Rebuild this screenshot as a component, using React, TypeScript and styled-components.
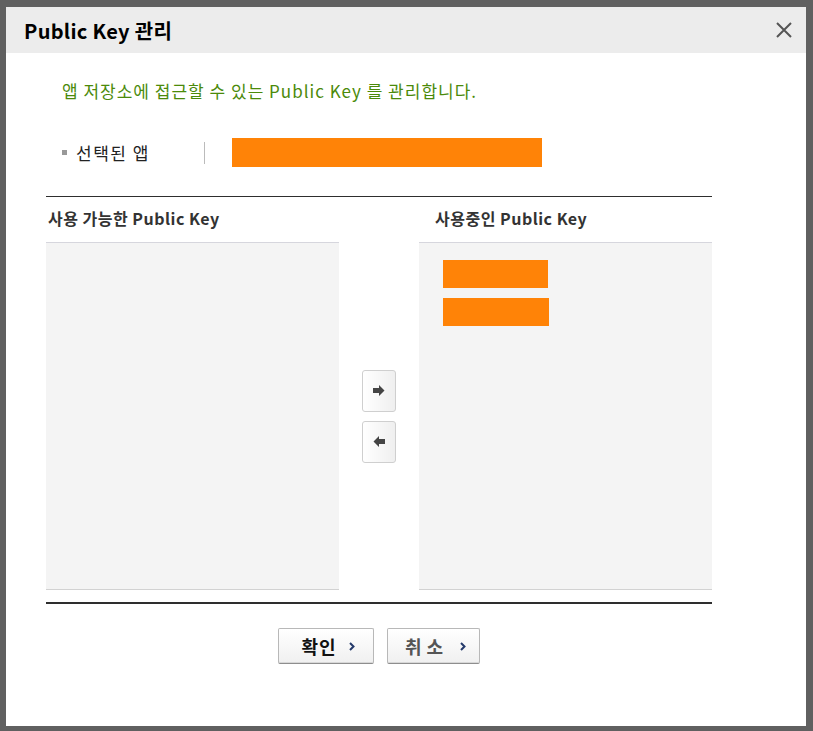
import React from "react";
import styled, { createGlobalStyle } from "styled-components";

const Global = createGlobalStyle`
  html, body { margin: 0; padding: 0; background: #606060; }
  body { font-family: "Noto Sans CJK KR", "Noto Sans", sans-serif; }
`;

const Frame = styled.div`
  padding: 7px 7px 5px 6px;
`;

const Dialog = styled.div`
  width: 800px;
  height: 719px;
  background: #fff;
  display: flex;
  flex-direction: column;
`;

const Header = styled.div`
  height: 46px;
  background: #ececec;
  display: flex;
  align-items: center;
  justify-content: space-between;
  padding: 0 13px 0 18px;
  box-sizing: border-box;
`;

const Title = styled.h1`
  margin: 0;
  font-size: 20px;
  font-weight: 700;
  color: #000;
  letter-spacing: 0.3px;
`;

const Close = styled.button`
  border: none;
  background: none;
  padding: 0;
  width: 18px;
  height: 18px;
  display: flex;
  cursor: pointer;
`;

const Body = styled.div`
  padding: 0 94px 0 40px;
  display: flex;
  flex-direction: column;
`;

const Desc = styled.p`
  margin: 27px 0 0 16px;
  font-size: 17px;
  line-height: 22px;
  color: #4b8a0a;
  letter-spacing: 1px;
`;

const AppRow = styled.div`
  display: flex;
  align-items: center;
  margin: 36px 0 0 16px;
  height: 29px;
`;

const Label = styled.span`
  width: 142px;
  font-size: 17px;
  color: #222;
  display: flex;
  align-items: center;
  gap: 9px;
  letter-spacing: 1.5px;
  &::before {
    content: "";
    width: 5px;
    height: 5px;
    background: #999;
  }
`;

const Divider = styled.span`
  width: 1px;
  height: 22px;
  background: #bbb;
  margin-right: 27px;
`;

const Redact = styled.div<{ $w: number; $h: number }>`
  width: ${(p) => p.$w}px;
  height: ${(p) => p.$h}px;
  background: #ff8307;
`;

const Section = styled.div`
  margin-top: 29px;
  border-top: 1px solid #2e2e2e;
  border-bottom: 2px solid #2e2e2e;
  display: grid;
  grid-template-columns: 293px 1fr 293px;
  padding-bottom: 12px;
`;

const Column = styled.div`
  display: flex;
  flex-direction: column;
`;

const ColTitle = styled.div`
  height: 45px;
  box-sizing: border-box;
  padding: 0 0 4px 2px;
  display: flex;
  align-items: center;
  font-size: 16px;
  font-weight: 700;
  color: #333;
  letter-spacing: 0.5px;
`;

const ColTitleRight = styled(ColTitle)`
  padding-left: 16px;
`;

const List = styled.div`
  background: #f4f4f4;
  border-top: 1px solid #d6d6dd;
  border-bottom: 1px solid #d2d2d2;
  padding: 17px 24px;
  box-sizing: content-box;
  display: flex;
  flex-direction: column;
  gap: 10px;
  height: 312px;
`;

const Middle = styled.div`
  display: flex;
  flex-direction: column;
  align-items: center;
  justify-content: center;
  gap: 9px;
  padding-top: 45px;
`;

const ArrowBtn = styled.button`
  width: 34px;
  height: 42px;
  border: 1px solid #cfcfcf;
  border-radius: 3px;
  background: linear-gradient(to right, #ffffff, #efefef);
  display: flex;
  align-items: center;
  justify-content: center;
  padding: 0;
  cursor: pointer;
`;

const Footer = styled.div`
  display: flex;
  justify-content: center;
  gap: 13px;
  margin-top: 24px;
`;

const Btn = styled.button<{ $w: number; $muted?: boolean }>`
  width: ${(p) => p.$w}px;
  height: 36px;
  border: 1px solid #b8b8b8;
  border-bottom-color: #8e8e8e;
  border-radius: 2px;
  background: linear-gradient(to bottom, #ffffff, #f0f0f0);
  box-shadow: inset 0 -1px 0 #d8d8d8;
  font-family: "Noto Sans CJK KR", sans-serif;
  font-size: 18px;
  font-weight: 700;
  color: ${(p) => (p.$muted ? "#555" : "#111")};
  display: flex;
  align-items: center;
  justify-content: center;
  gap: 12px;
  padding: 0 0 0 4px;
  letter-spacing: ${(p) => (p.$muted ? "5px" : "1px")};
`;

const Chevron = () => (
  <svg width="6" height="9" viewBox="0 0 6 9">
    <path d="M1 1 L4.5 4.5 L1 8" stroke="#243a6b" strokeWidth="2" fill="none" />
  </svg>
);

const ArrowIcon = ({ left }: { left?: boolean }) => (
  <svg width="12" height="11" viewBox="0 0 12 11" style={{ transform: left ? "scaleX(-1)" : undefined }}>
    <path d="M0 3 H6 V0 L11.5 5.5 L6 11 V8 H0 Z" fill="#444" />
  </svg>
);

export default function App() {
  return (
    <>
      <Global />
      <Frame>
        <Dialog>
          <Header>
            <Title>Public Key 관리</Title>
            <Close aria-label="close">
              <svg width="18" height="18" viewBox="0 0 18 18">
                <path d="M2 2 L16 16 M16 2 L2 16" stroke="#555" strokeWidth="2" />
              </svg>
            </Close>
          </Header>
          <Body>
            <Desc>앱 저장소에 접근할 수 있는 Public Key 를 관리합니다.</Desc>
            <AppRow>
              <Label>선택된 앱</Label>
              <Divider />
              <Redact $w={310} $h={29} />
            </AppRow>
            <Section>
              <Column>
                <ColTitle>사용 가능한 Public Key</ColTitle>
                <List />
              </Column>
              <Middle>
                <ArrowBtn aria-label="add">
                  <ArrowIcon />
                </ArrowBtn>
                <ArrowBtn aria-label="remove">
                  <ArrowIcon left />
                </ArrowBtn>
              </Middle>
              <Column>
                <ColTitleRight>사용중인 Public Key</ColTitleRight>
                <List>
                  <Redact $w={105} $h={28} />
                  <Redact $w={106} $h={28} />
                </List>
              </Column>
            </Section>
            <Footer>
              <Btn $w={96}>
                확인 <Chevron />
              </Btn>
              <Btn $w={93} $muted>
                취소 <Chevron />
              </Btn>
            </Footer>
          </Body>
        </Dialog>
      </Frame>
    </>
  );
}
